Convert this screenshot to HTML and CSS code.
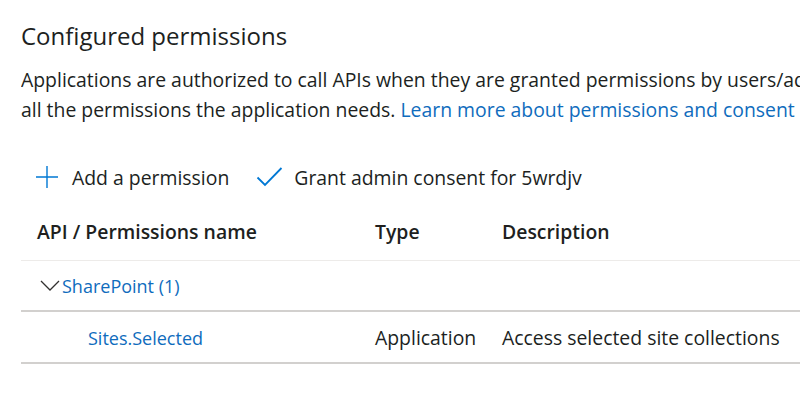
FILE: index.html
```html
<!DOCTYPE html>
<html>

<head>
  <link rel="stylesheet" href="styles.css">
</head>

<body>

  <div class="page">
    <h2 class="title">Configured permissions</h2>

    <p class="intro">
      Applications are authorized to call APIs when they are granted permissions by users/admins as part of the consent process. The list of configured permissions should include<br>
      all the permissions the application needs. <a href="#" class="link">Learn more about permissions and consent</a>
    </p>

    <div class="toolbar">
      <a href="#" class="tool">
        <svg class="icon" width="24" height="24" viewBox="0 0 24 24">
          <path d="M12 1v22M1 12h22" stroke="#0078d4" stroke-width="1.4" fill="none" />
        </svg>
        <span>Add a permission</span>
      </a>
      <a href="#" class="tool">
        <svg class="icon" width="27" height="22" viewBox="0 0 27 22">
          <path d="M1.5 11.5l7.5 7.5L25.5 2" stroke="#0078d4" stroke-width="1.8" fill="none" />
        </svg>
        <span>Grant admin consent for 5wrdjv</span>
      </a>
    </div>

    <div class="grid">
      <div class="row head">
        <div class="cell name">API / Permissions name</div>
        <div class="cell">Type</div>
        <div class="cell">Description</div>
      </div>
      <div class="row group">
        <div class="cell name">
          <svg class="chevron" width="20" height="12" viewBox="0 0 20 12">
            <path d="M1 1l9 9 9-9" stroke="#323130" stroke-width="1.3" fill="none" />
          </svg>
          <a href="#" class="link">SharePoint (1)</a>
        </div>
        <div class="cell"></div>
        <div class="cell"></div>
      </div>
      <div class="row item">
        <div class="cell name"><a href="#" class="link">Sites.Selected</a></div>
        <div class="cell">Application</div>
        <div class="cell">Access selected site collections</div>
      </div>
    </div>
  </div>

</body>

</html>
```

FILE: styles.css
```css
* {
  box-sizing: border-box;
}

body {
  margin: 0;
  overflow: hidden;
  background: #fff;
  color: #201f1e;
  font-family: "Open Sans", "Noto Sans", sans-serif;
}

.page {
  padding: 18px 0 0 21px;
  width: 800px;
}

.title {
  margin: 0;
  font-size: 24px;
  font-weight: 400;
  line-height: 36px;
}

.intro {
  margin: 11px 0 0;
  font-size: 19.4px;
  line-height: 30px;
  white-space: nowrap;
  overflow: hidden;
}

.link {
  color: #0f6cbd;
  text-decoration: none;
}

.toolbar {
  display: flex;
  align-items: center;
  gap: 27px;
  margin-top: 37px;
  padding-left: 14px;
  height: 30px;
}

.tool {
  display: flex;
  align-items: center;
  gap: 11px;
  color: #201f1e;
  text-decoration: none;
  font-size: 19.4px;
}

.tool:first-child {
  gap: 13px;
}

.grid {
  margin-top: 11px;
}

.row {
  display: grid;
  grid-template-columns: 354px 127px 1fr;
  align-items: center;
  font-size: 19.4px;
}

.cell {
  white-space: nowrap;
}

.row .link {
  font-size: 18px;
}

.row .name {
  padding-left: 16px;
}

.head {
  height: 58px;
  font-weight: 600;
  border-bottom: 1px solid #edebe9;
}

.group {
  height: 51px;
  border-bottom: 2px solid #d2d0ce;
}

.group .name {
  display: flex;
  align-items: center;
  gap: 2px;
  padding-left: 19px;
}

.item {
  height: 52px;
  border-bottom: 2px solid #d2d0ce;
}

.item .name {
  padding-left: 67px;
}
```
